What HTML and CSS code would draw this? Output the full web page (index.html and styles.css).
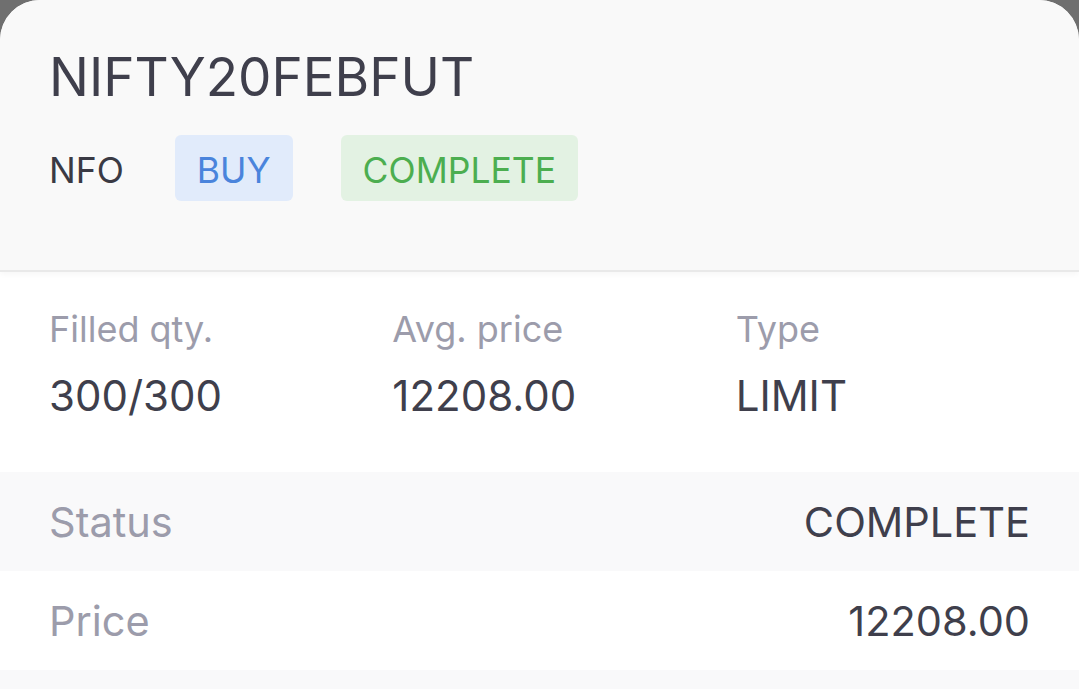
FILE: index.html
```html
<!DOCTYPE html>
<html>
<head>
<meta charset="utf-8">
<link rel="stylesheet" href="styles.css">
</head>
<body>
<div class="sheet">
  <header class="head">
    <h1 class="symbol">NIFTY20FEBFUT</h1>
    <div class="tags">
      <span class="exch">NFO</span>
      <span class="badge buy">BUY</span>
      <span class="badge done">COMPLETE</span>
    </div>
  </header>
  <section class="stats">
    <div class="stat">
      <div class="label">Filled qty.</div>
      <div class="value">300/300</div>
    </div>
    <div class="stat">
      <div class="label">Avg. price</div>
      <div class="value">12208.00</div>
    </div>
    <div class="stat">
      <div class="label">Type</div>
      <div class="value">LIMIT</div>
    </div>
  </section>
  <div class="row alt">
    <span class="rlabel">Status</span>
    <span class="rvalue">COMPLETE</span>
  </div>
  <div class="row">
    <span class="rlabel">Price</span>
    <span class="rvalue">12208.00</span>
  </div>
  <div class="row alt"></div>
</div>
</body>
</html>
```
FILE: styles.css
```css
* { box-sizing: border-box; }
html, body {
  margin: 0;
  padding: 0;
  height: 100%;
  background: #6f6f6f;
  overflow: hidden;
}
body {
  font-family: Inter, Roboto, sans-serif;
  color: #3f3f4c;
}
.sheet {
  background: #ffffff;
  border-radius: 40px 40px 0 0;
  overflow: hidden;
  height: 100%;
}
.head {
  background: #f9f9f9;
  height: 272px;
  padding: 42px 49px 0;
  border-bottom: 2px solid #e9e9e9;
  box-shadow: 0 2px 6px rgba(0,0,0,0.04);
}
.symbol {
  margin: 0;
  font-weight: 400;
  font-size: 53px;
  line-height: 70px;
  color: #3f3f4c;
}
.tags {
  display: flex;
  align-items: center;
  margin-top: 23px;
}
.exch {
  font-size: 35.5px;
  color: #3a3a44;
  margin-right: 51px;
  padding-top: 4px;
}
.badge {
  height: 66px;
  display: inline-flex;
  align-items: center;
  padding: 4px 22px 0;
  font-size: 35.5px;
  border-radius: 6px;
  margin-right: 48px;
}
.buy { background: #e1ebfb; color: #4a84dc; }
.done { background: #e3f2e3; color: #4cae50; }
.stats {
  display: grid;
  grid-template-columns: repeat(3, 1fr);
  padding: 32px 0 0 49px;
  height: 200px;
}
.label {
  font-size: 36px;
  line-height: 50px;
  color: #9c9cab;
}
.value {
  font-size: 42px;
  line-height: 54px;
  margin-top: 15px;
  color: #3f3f4c;
}
.row {
  height: 99px;
  display: flex;
  align-items: center;
  justify-content: space-between;
  padding: 0 49px;
  font-size: 41.5px;
}
.row.alt { background: #f9f9fa; }
.rlabel { color: #9c9cab; }
.rvalue { color: #3f3f4c; }
```
